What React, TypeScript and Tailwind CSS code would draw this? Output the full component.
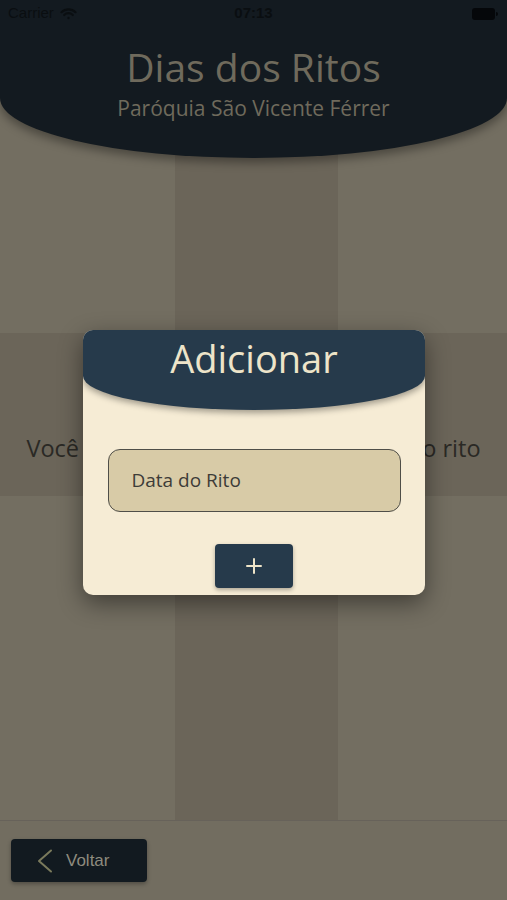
import { Plus } from 'lucide-react';

const sans = { fontFamily: '"Open Sans", "Noto Sans", sans-serif' };
const sys = { fontFamily: '"Liberation Sans", Arial, sans-serif' };

function StatusBar() {
  return (
    <div className="flex h-[27px] items-center justify-between px-2 text-[15px] text-[#0a0e11]" style={sys}>
      <div className="flex w-[120px] items-center gap-[6px]">
        <span>Carrier</span>
        <svg width="17" height="12" viewBox="0 0 17 12" fill="none" stroke="#0a0e11" strokeWidth="2.2" strokeLinecap="round">
          <path d="M1.5 4.2a10 10 0 0 1 14 0" />
          <path d="M4.2 7a6 6 0 0 1 8.6 0" />
          <circle cx="8.5" cy="10" r="1.2" fill="#0a0e11" stroke="none" />
        </svg>
      </div>
      <span className="font-semibold">07:13</span>
      <div className="flex w-[120px] justify-end pr-[1px]">
        <div className="flex items-center">
          <div className="h-[12px] w-[23px] rounded-[3px] bg-[#05070a]" />
          <div className="ml-[1px] h-[4px] w-[2px] rounded-r-sm bg-[#05070a]" />
        </div>
      </div>
    </div>
  );
}

export default function App() {
  return (
    <div className="relative flex h-[900px] w-[507px] flex-col overflow-hidden bg-[#736e61]" style={sans}>
      {/* Background cross */}
      <div className="grid h-[820px] shrink-0 grid-cols-[175px_163px_1fr] grid-rows-[333px_163px_1fr]">
        <div className="col-start-1 row-start-1 bg-[#736e61]" />
        <div className="col-start-2 row-start-1 bg-[#6b6559]" />
        <div className="col-start-3 row-start-1 bg-[#736e61]" />
        <div className="col-start-1 row-start-2 bg-[#6b6559]" />
        <div className="col-start-2 row-start-2 bg-[#6b6559]" />
        <div className="col-start-3 row-start-2 bg-[#6b6559]" />
        <div className="col-start-1 row-start-3 bg-[#736e61]" />
        <div className="col-start-2 row-start-3 bg-[#6b6559]" />
        <div className="col-start-3 row-start-3 bg-[#736e61]" />
        <div className="col-span-3 col-start-1 row-start-2 flex items-start justify-center whitespace-nowrap pt-[99px] text-[23.5px] leading-[33px] text-[#2a2925]">
          Você ainda não cadastrou dias para o rito
        </div>
      </div>

      {/* Bottom bar */}
      <div className="flex-1 border-t border-[#67625a] bg-[#726d60] pl-[11px] pt-[18px]">
        <button
          className="flex h-[43px] w-[136px] items-center rounded-[4px] bg-[#121a20] pl-[26px] text-[17px] text-[#8e8b7e] shadow-[0_2px_4px_rgba(0,0,0,0.3)]"
          style={sys}
        >
          <svg width="16" height="24" viewBox="0 0 16 24" fill="none" stroke="#7a7a5c" strokeWidth="2" strokeLinecap="round" strokeLinejoin="round">
            <path d="M14 1.5 2 12l12 10.5" />
          </svg>
          <span className="ml-[13px]">Voltar</span>
        </button>
      </div>

      {/* Header */}
      <div className="absolute left-0 right-0 top-0 h-[158px] rounded-b-[50%_60px] bg-[#131a20] shadow-[0_5px_10px_rgba(0,0,0,0.35)]">
        <StatusBar />
        <div className="flex flex-col items-center">
          <h1 className="mt-[14px] text-[39px] leading-[52px] text-[#6f6a5c]">Dias dos Ritos</h1>
          <p className="mt-[1px] text-[21px] leading-[28px] text-[#6f6a5c]">Paróquia São Vicente Férrer</p>
        </div>
      </div>

      {/* Modal */}
      <div className="absolute inset-0 flex justify-center pl-[1px] pt-[330px]">
        <div className="flex h-[265px] w-[342px] flex-col items-center overflow-hidden rounded-[10px] bg-[#f6ecd5] shadow-[0_8px_24px_rgba(0,0,0,0.45)]">
          <div className="flex h-[80px] w-full justify-center rounded-b-[50%_34px] bg-[#263a4b] shadow-[0_3px_6px_rgba(0,0,0,0.35)]">
            <span className="mt-[3px] text-[38px] leading-[50px] text-[#ede4c9]">Adicionar</span>
          </div>
          <div className="mt-[39px] flex h-[63px] w-[293px] items-center rounded-[12px] border-[1.5px] border-[#4f4e48] bg-[#d8cba7] pl-[23px] text-[19px] text-[#3d3c38]">
            Data do Rito
          </div>
          <button className="mt-[32px] flex h-[44px] w-[78px] items-center justify-center rounded-[4px] bg-[#263a4b] shadow-[0_2px_4px_rgba(0,0,0,0.3)]">
            <Plus className="h-[24px] w-[24px] text-[#eee4c8]" strokeWidth={2} />
          </button>
        </div>
      </div>
    </div>
  );
}
